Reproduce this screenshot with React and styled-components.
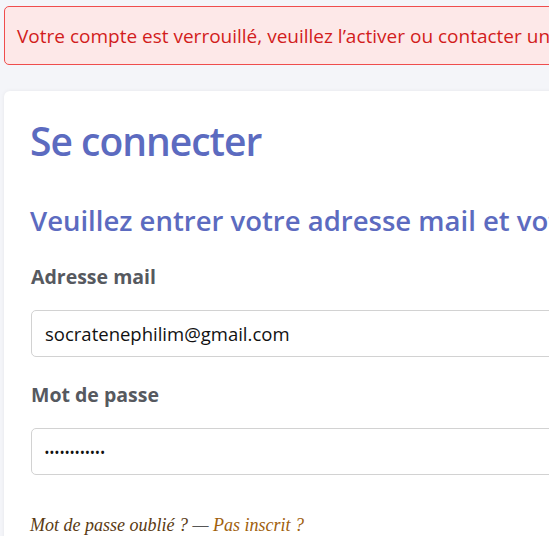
import React from "react";
import styled, { createGlobalStyle } from "styled-components";

const Global = createGlobalStyle`
  html, body { margin: 0; padding: 0; background: #f4f5f9; overflow: hidden; }
  body { font-family: "Open Sans", "Noto Sans", sans-serif; }
`;

const Page = styled.div`
  width: 820px;
  padding: 6px 0 0 4px;
  box-sizing: border-box;
  display: flex;
  flex-direction: column;
  gap: 26px;
`;

const Alert = styled.div`
  box-sizing: border-box;
  height: 59px;
  display: flex;
  align-items: center;
  padding: 0 12px;
  background: #fde8e8;
  border: 1px solid #ef4d4d;
  border-radius: 5px;
  color: #d21c1c;
  font-size: 19px;
  white-space: nowrap;
`;

const Card = styled.div`
  background: #ffffff;
  border-radius: 6px;
  box-shadow: 0 0 4px rgba(0, 0, 0, 0.06);
  padding: 22px 26px 40px 26px;
  display: flex;
  flex-direction: column;
`;

const Title = styled.h1`
  margin: 0;
  font-size: 39px;
  font-weight: 600;
  color: #5c6bc0;
  letter-spacing: -1px;
  line-height: 56px;
`;

const Subtitle = styled.h2`
  margin: 34px 0 0 0;
  font-size: 27.5px;
  font-weight: 600;
  color: #5c6bc0;
  line-height: 36px;
  white-space: nowrap;
`;

const Field = styled.div`
  display: flex;
  flex-direction: column;
  margin-top: ${(p) => p.$top}px;
`;

const Label = styled.label`
  font-size: 19.5px;
  font-weight: 700;
  color: #56595f;
  line-height: 28px;
  margin-left: 1px;
`;

const Input = styled.div`
  box-sizing: border-box;
  margin-top: 19px;
  height: 47px;
  margin-left: 1px;
  border: 1px solid #d2d2d2;
  border-radius: 5px;
  display: flex;
  align-items: center;
  padding: 0 13px;
  font-size: 18.5px;
  color: #111;
`;

const Dots = styled.span`
  font-size: 10px;
  letter-spacing: 1.3px;
  font-weight: 700;
`;

const Links = styled.div`
  margin-top: 40px;
  font-family: "Liberation Serif", "DejaVu Serif", serif;
  font-style: italic;
  font-size: 18px;
  color: #5a3a12;
  white-space: nowrap;
`;

const Dash = styled.span`
  color: #555;
`;

const Accent = styled.span`
  color: #a0600c;
`;

export default function App() {
  return (
    <>
      <Global />
      <Page>
        <Alert>Votre compte est verrouillé, veuillez l’activer ou contacter un administrateur.</Alert>
        <Card>
          <Title>Se connecter</Title>
          <Subtitle>Veuillez entrer votre adresse mail et votre mot de passe</Subtitle>
          <Field $top={24}>
            <Label>Adresse mail</Label>
            <Input>socratenephilim@gmail.com</Input>
          </Field>
          <Field $top={24}>
            <Label>Mot de passe</Label>
            <Input><Dots>••••••••••••</Dots></Input>
          </Field>
          <Links>
            Mot de passe oublié ? <Dash>—</Dash> <Accent>Pas inscrit ?</Accent>
          </Links>
        </Card>
      </Page>
    </>
  );
}
